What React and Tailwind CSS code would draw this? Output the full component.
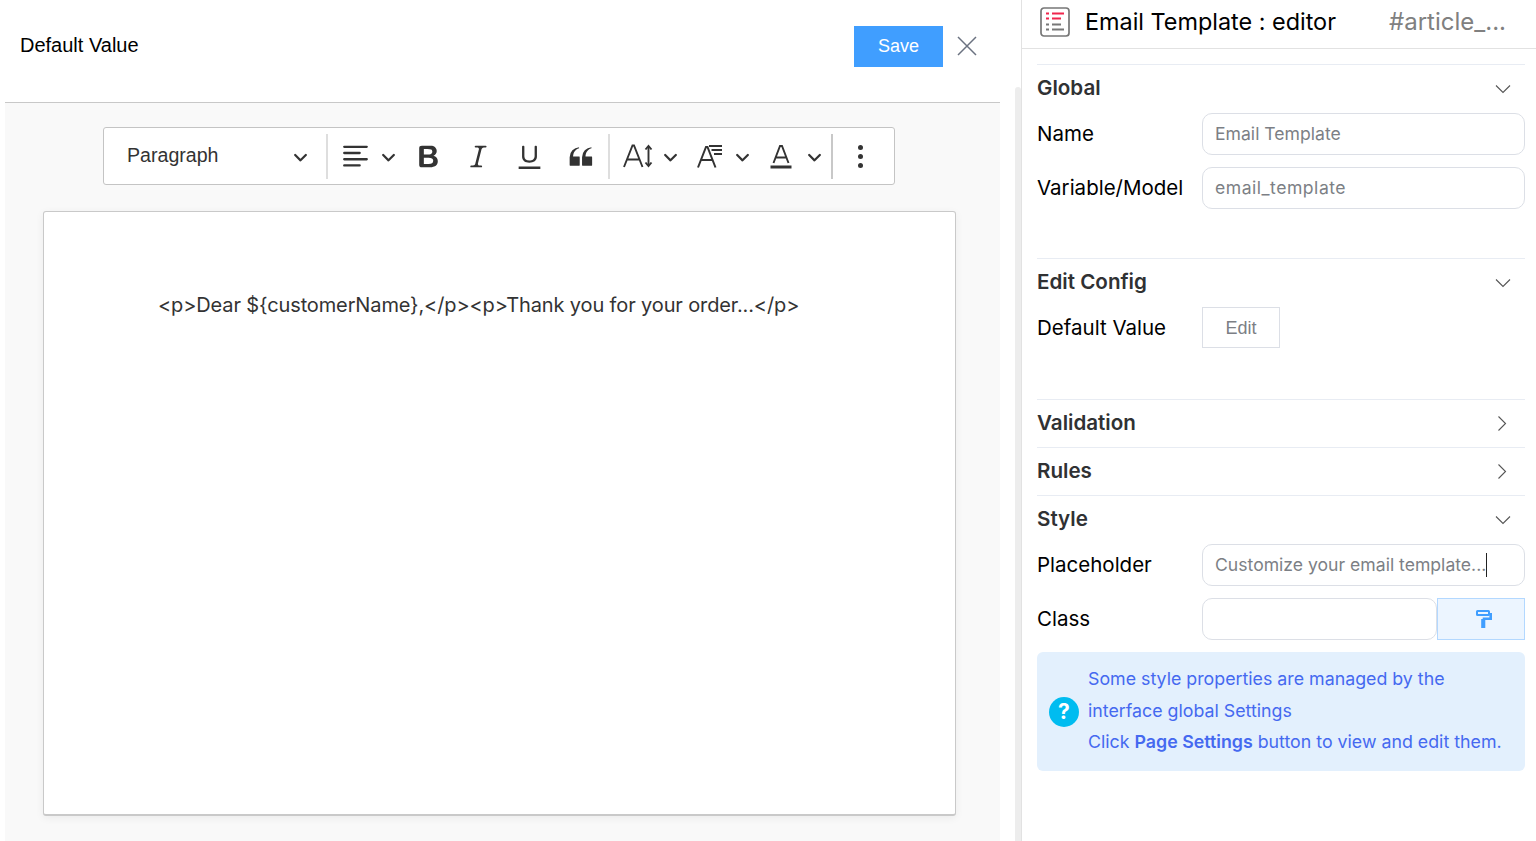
const Chev = ({ className = "" }) => (
  <svg viewBox="0 0 10 10" className={`w-[15px] h-[15px] shrink-0 ${className}`} fill="#333">
    <path d="M.941 4.523a.75.75 0 1 1 1.06-1.06l3.006 3.005 3.005-3.005a.75.75 0 1 1 1.06 1.06l-3.549 3.55a.75.75 0 0 1-1.168-.136L.941 4.523z" />
  </svg>
);

const Ico = ({ d }) => (
  <svg viewBox="0 0 20 20" className="w-[31px] h-[31px] shrink-0" fill="#333"><path d={d} /></svg>
);

const ALIGN = "M2 3.75c0 .414.336.75.75.75h14.5a.75.75 0 1 0 0-1.5H2.75a.75.75 0 0 0-.75.75zm0 8c0 .414.336.75.75.75h14.5a.75.75 0 1 0 0-1.5H2.75a.75.75 0 0 0-.75.75zm0 4c0 .414.336.75.75.75h9.929a.75.75 0 1 0 0-1.5H2.75a.75.75 0 0 0-.75.75zm0-8c0 .414.336.75.75.75h9.929a.75.75 0 1 0 0-1.5H2.75a.75.75 0 0 0-.75.75z";
const BOLD = "M10.187 17H5.773c-.637 0-1.092-.138-1.364-.415-.273-.277-.409-.718-.409-1.323V4.738c0-.617.14-1.062.419-1.332.279-.27.73-.406 1.354-.406h4.68c.69 0 1.288.041 1.793.124.506.083.96.242 1.36.478.341.197.644.447.906.75a3.262 3.262 0 0 1 .808 2.162c0 1.401-.722 2.426-2.167 3.075C15.05 10.175 16 11.315 16 13.01a3.756 3.756 0 0 1-2.296 3.504 6.1 6.1 0 0 1-1.517.377c-.571.073-1.238.11-2 .11zm-.217-6.217H7v4.087h3.069c1.977 0 2.965-.69 2.965-2.072 0-.707-.256-1.22-.768-1.537-.512-.319-1.277-.478-2.296-.478zM7 5.13v3.619h2.606c.729 0 1.292-.067 1.69-.2a1.6 1.6 0 0 0 .91-.765c.165-.267.247-.566.247-.897 0-.707-.26-1.176-.778-1.409-.519-.232-1.31-.348-2.375-.348H7z";
const ITALIC = "m9.586 14.633.021.004c-.036.335.095.655.393.962.082.083.173.15.274.201h1.474a.6.6 0 1 1 0 1.2H5.304a.6.6 0 0 1 0-1.2h1.15c.474-.07.809-.182 1.005-.334.157-.122.291-.32.404-.597l2.416-9.55a1.053 1.053 0 0 0-.281-.823 1.12 1.12 0 0 0-.442-.296H8.15a.6.6 0 0 1 0-1.2h6.443a.6.6 0 1 1 0 1.2h-1.195c-.376.056-.65.155-.823.296-.215.175-.423.439-.623.79l-2.366 9.347z";
const UNDER = "M3 18v-1.5h14V18zm2.2-8V3.6c0-.4.4-.6.8-.6.3 0 .7.2.7.6v6.2c0 2 1.3 2.8 3.2 2.8 1.9 0 3.4-.9 3.4-2.9V3.6c0-.3.4-.5.8-.5.3 0 .7.2.7.5V10c0 2.7-2.2 4-4.9 4-2.6 0-4.7-1.2-4.7-4z";
const QUOTE = "M3 10.423a6.5 6.5 0 0 1 6.056-6.408l.038.67C6.448 5.423 5.354 7.663 5.22 10H9c.552 0 .5.432.5.986v4.511c0 .554-.448.503-1 .503h-5c-.552 0-.5-.449-.5-1.003v-4.574zm8 0a6.5 6.5 0 0 1 6.056-6.408l.038.67c-2.646.739-3.74 2.979-3.873 5.315H17c.552 0 .5.432.5.986v4.511c0 .554-.448.503-1 .503h-5c-.552 0-.5-.449-.5-1.003v-4.574z";

const FontSizeIcon = () => (
  <svg viewBox="0 0 30 26" className="w-[30px] h-[26px] shrink-0" fill="none" stroke="#333" strokeWidth="1.9">
    <path d="M1 24 L9.5 2.5 L11 2.5 L19.5 24 M4.5 16.5 H16" />
    <path d="M25.5 4 V22" />
    <path d="M22.5 6.5 L25.5 3 L28.5 6.5 M22.5 19.5 L25.5 23 L28.5 19.5" />
  </svg>
);
const FontFamilyIcon = () => (
  <svg viewBox="0 0 26 26" className="w-[26px] h-[26px] shrink-0" fill="none" stroke="#333" strokeWidth="2">
    <path d="M1 24.5 L9 4 H10.5 L18.5 24.5 M4.5 17 H15.5" />
    <path d="M12 3 H25 M14.5 7 H25 M17 11 H25" strokeWidth="1.9" />
  </svg>
);
const FontColorIcon = () => (
  <svg viewBox="0 0 22 26" className="w-[22px] h-[26px] shrink-0" fill="none" stroke="#333" strokeWidth="1.9">
    <path d="M3.5 20 L10 3 H12 L18.5 20 M6 14.5 H16" />
    <path d="M0.5 24 H21.5" strokeWidth="3" />
  </svg>
);

const Caret = ({ open }) => (
  <svg viewBox="0 0 16 16" className="w-[16px] h-[16px] text-[#555]" fill="none" stroke="currentColor" strokeWidth="1.1">
    {open ? <path d="M1 4.5 L8 11.5 L15 4.5" /> : <path d="M3.5 0.5 L10.5 7.5 L3.5 14.5" />}
  </svg>
);

const Section = ({ title, open }) => (
  <div className="h-[48px] border-t border-[#e8ecf3] flex items-center justify-between pr-[14px]">
    <span className="text-[20.6px] font-semibold text-[#303133]">{title}</span>
    <Caret open={open} />
  </div>
);

const Field = ({ label, children, className = "" }) => (
  <div className={`flex items-center h-[42px] ${className}`}>
    <span className="w-[165px] shrink-0 text-[20.5px] text-black">{label}</span>
    {children}
  </div>
);

const Input = ({ children, className = "" }) => (
  <div className={`h-[42px] border border-[#dcdfe6] rounded-[10px] bg-white flex items-center px-[12px] text-[17.6px] text-[#7c7f85] ${className}`}>
    {children}
  </div>
);

export default function App() {
  return (
    <div className="flex h-[841px] w-[1536px] overflow-hidden bg-white">
      <div className="w-[1000px] shrink-0 pl-[5px] flex flex-col">
        <div className="h-[103px] shrink-0 border-b border-[#c8c8c8] flex items-center pl-[15px] pb-[10px] font-['Liberation_Sans',sans-serif]">
          <span className="text-[20px] text-black flex-1 pb-[2px]">Default Value</span>
          <button className="w-[89px] h-[41px] bg-[#409eff] text-white text-[18px] mt-[1px]">Save</button>
          <svg viewBox="0 0 20 20" className="ml-[14px] mr-[23px] w-[20px] h-[20px]" fill="none" stroke="#6b7280" strokeWidth="1.5">
            <path d="M1 1 L19 19 M19 1 L1 19" />
          </svg>
        </div>
        <div className="flex-1 bg-[#f9f9f9] pt-[24px] pl-[38px]">
          <div className="ml-[60px] w-[792px] h-[58px] border border-[#c4c4c4] rounded-[3px] bg-white flex items-center font-['Liberation_Sans',sans-serif]">
            <div className="w-[222px] shrink-0 pl-[23px] pr-[18px] flex items-center justify-between">
              <span className="text-[19.6px] text-[#333] pb-[1px]">Paragraph</span>
              <Chev className="mt-[2px]" />
            </div>
            <div className="w-[2px] h-[45px] bg-[#dedede]" />
            <div className="ml-[12px]"><Ico d={ALIGN} /></div>
            <Chev className="ml-[10px]" />
            <div className="ml-[17px]"><Ico d={BOLD} /></div>
            <div className="ml-[19px]"><Ico d={ITALIC} /></div>
            <div className="ml-[20px]"><Ico d={UNDER} /></div>
            <div className="ml-[20px]"><Ico d={QUOTE} /></div>
            <div className="ml-[12px] w-[2px] h-[45px] bg-[#dedede]" />
            <div className="ml-[13px]"><FontSizeIcon /></div>
            <Chev className="ml-[10px]" />
            <div className="ml-[19px]"><FontFamilyIcon /></div>
            <Chev className="ml-[12px]" />
            <div className="ml-[20px]"><FontColorIcon /></div>
            <Chev className="ml-[15px]" />
            <div className="ml-[9px] w-[2px] h-[45px] bg-[#c8c8c8]" />
            <div className="ml-[25px] flex flex-col gap-[4px]">
              <span className="w-[5px] h-[5px] rounded-full bg-[#333]" />
              <span className="w-[5px] h-[5px] rounded-full bg-[#333]" />
              <span className="w-[5px] h-[5px] rounded-full bg-[#333]" />
            </div>
          </div>
          <div className="mt-[26px] w-[913px] h-[605px] bg-white border border-[#c9c9c9] border-b-2 rounded-[3px] shadow-[0_2px_8px_rgba(0,0,0,0.06)] pl-[114px] pt-[78px] font-['Inter',sans-serif] text-[20px] tracking-[-0.13px] leading-[30px] text-[#333]">
            {"<p>Dear ${customerName},</p><p>Thank you for your order...</p>"}
          </div>
        </div>
      </div>

      <div className="w-[21px] shrink-0 flex justify-end">
        <div className="w-[6px] h-[754px] mt-[87px] bg-[#ededed] rounded-t-[3px]" />
      </div>

      <div className="flex-1 border-l border-[#e2e2e2] font-['Inter',sans-serif]">
        <div className="h-[49px] border-b border-[#e2e2e2] flex items-center pl-[18px] pb-[4px]">
          <svg viewBox="0 0 30 30" className="w-[30px] h-[30px] shrink-0" fill="none">
            <rect x="1" y="1" width="28" height="28" rx="3" stroke="#777" strokeWidth="1.7" />
            <path d="M6 6.5 H9 M12 6.5 H24 M6 11.5 H9 M12 11.5 H21" stroke="#f0264d" strokeWidth="1.8" />
            <path d="M6 17.5 H9 M12 17.5 H21 M6 22.5 H9 M12 22.5 H24" stroke="#777" strokeWidth="1.8" />
          </svg>
          <span className="ml-[15px] text-[23.4px] text-black w-[304px] shrink-0">Email Template : editor</span>
          <span className="text-[24px] text-[#808080]">#article_...</span>
        </div>
        <div className="pl-[15px] pr-[11px] pt-[15px]">
          <Section title="Global" open />
          <div className="pt-[1px] pb-[49px] flex flex-col gap-[12px]">
            <Field label="Name"><Input className="flex-1">Email Template</Input></Field>
            <Field label="Variable/Model"><Input className="flex-1 tracking-[0.5px]">email_template</Input></Field>
          </div>
          <Section title="Edit Config" open />
          <div className="pt-[1px] pb-[50px]">
            <Field label="Default Value">
              <button className="self-start w-[78px] h-[41px] pt-[1px] border border-[#dcdfe6] text-[18px] text-[#7c7f85] font-['Liberation_Sans',sans-serif]">Edit</button>
            </Field>
          </div>
          <Section title="Validation" />
          <Section title="Rules" />
          <Section title="Style" open />
          <div className="pt-[1px] flex flex-col gap-[12px]">
            <Field label="Placeholder">
              <Input className="flex-1">Customize your email template...<span className="w-px h-[24px] bg-[#222]" /></Input>
            </Field>
            <Field label="Class">
              <Input className="w-[235px]" />
              <button className="flex-1 h-[42px] bg-[#ecf5ff] border border-[#b3d8ff] flex items-center justify-center">
                <svg viewBox="0 0 16 18" className="ml-[5px] w-[16px] h-[18px]" fill="none">
                  <rect x="1" y="1" width="12" height="4" rx="0.5" stroke="#409eff" strokeWidth="2" />
                  <path d="M14.7 3 V8.7 H8 V18" stroke="#409eff" strokeWidth="2.6" />
                  <path d="M6.5 9 V18" stroke="#409eff" strokeWidth="2.6" />
                </svg>
              </button>
            </Field>
            <div className="h-[119px] rounded-[6px] bg-[#e3f0fd] flex items-center pl-[12px] text-[17.8px] leading-[31.5px] text-[#4569f0]">
              <div className="w-[30px] h-[30px] rounded-full bg-[#00bcf0] text-white font-bold text-[21px] flex items-center justify-center shrink-0">?</div>
              <div className="ml-[9px] pb-[2px]">
                <div>Some style properties are managed by the</div>
                <div>interface global Settings</div>
                <div>Click <b className="font-semibold">Page Settings</b> button to view and edit them.</div>
              </div>
            </div>
          </div>
        </div>
      </div>
    </div>
  );
}
